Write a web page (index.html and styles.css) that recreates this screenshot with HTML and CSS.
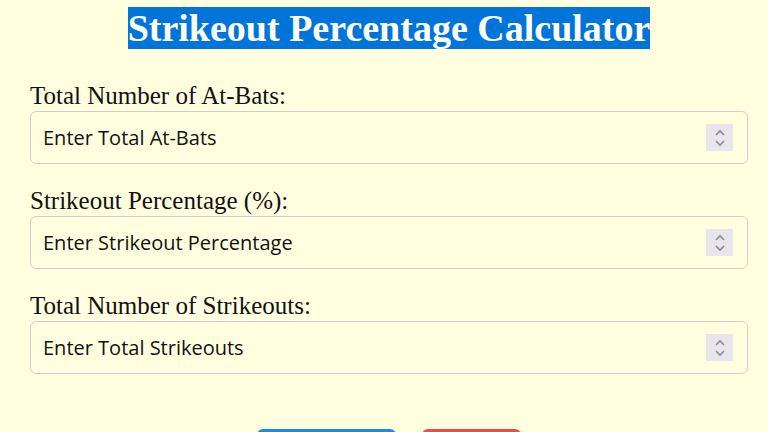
FILE: index.html
```html
<!DOCTYPE html>
<html lang="en">
<head>
<meta charset="utf-8">
<title>Strikeout Percentage Calculator</title>
<link rel="stylesheet" href="styles.css">
</head>
<body>
<div class="page">
  <h1 class="title"><span class="title-text">Strikeout Percentage Calculator</span></h1>
  <form class="calc">
    <div class="field">
      <label class="label" for="atbats">Total Number of At-Bats:</label>
      <div class="box">
        <input class="inp" id="atbats" type="text" placeholder="Enter Total At-Bats">
        <span class="spin"><svg width="14" height="22" viewBox="0 0 14 22"><path d="M3 8 L7 4 L11 8" fill="none" stroke="#8a8a94" stroke-width="1.6"/><path d="M3 14 L7 18 L11 14" fill="none" stroke="#8a8a94" stroke-width="1.6"/></svg></span>
      </div>
    </div>
    <div class="field">
      <label class="label" for="pct">Strikeout Percentage (%):</label>
      <div class="box">
        <input class="inp" id="pct" type="text" placeholder="Enter Strikeout Percentage">
        <span class="spin"><svg width="14" height="22" viewBox="0 0 14 22"><path d="M3 8 L7 4 L11 8" fill="none" stroke="#8a8a94" stroke-width="1.6"/><path d="M3 14 L7 18 L11 14" fill="none" stroke="#8a8a94" stroke-width="1.6"/></svg></span>
      </div>
    </div>
    <div class="field">
      <label class="label" for="so">Total Number of Strikeouts:</label>
      <div class="box">
        <input class="inp" id="so" type="text" placeholder="Enter Total Strikeouts">
        <span class="spin"><svg width="14" height="22" viewBox="0 0 14 22"><path d="M3 8 L7 4 L11 8" fill="none" stroke="#8a8a94" stroke-width="1.6"/><path d="M3 14 L7 18 L11 14" fill="none" stroke="#8a8a94" stroke-width="1.6"/></svg></span>
      </div>
    </div>
    <div class="actions">
      <button type="button" class="btn btn-calc">Calculate</button>
      <button type="button" class="btn btn-reset">Reset</button>
    </div>
  </form>
</div>
</body>
</html>
```

FILE: styles.css
```css
html, body {
  margin: 0;
  padding: 0;
  background: #ffffe0;
}
body {
  font-family: "Liberation Serif", "Times New Roman", serif;
  color: #111;
}
.page {
  padding: 8px 20px 0 30px;
}
.title {
  margin: 0;
  text-align: center;
  font-size: 38px;
  font-weight: bold;
  line-height: 41px;
}
.title-text {
  background: #0074d9;
  color: #ffffff;
}
.calc {
  margin-top: 31px;
}
.field {
  margin-bottom: 21px;
}
.label {
  display: block;
  font-size: 25px;
  line-height: 31px;
  height: 31px;
}
.box {
  display: flex;
  align-items: center;
  height: 53px;
  box-sizing: border-box;
  border: 1px solid #cfcfcf;
  border-radius: 6px;
  padding: 0 14px 0 12px;
}
.inp {
  flex: 1;
  border: none;
  background: transparent;
  outline: none;
  font-family: "Open Sans", "Noto Sans", sans-serif;
  font-size: 20px;
  color: #111;
  padding: 0;
  margin: 0;
}
.inp::placeholder {
  color: #111;
  opacity: 1;
}
.spin {
  display: flex;
  align-items: center;
  justify-content: center;
  width: 27px;
  height: 27px;
  background: #e8e6ec;
}
.actions {
  display: flex;
  justify-content: center;
  gap: 26px;
  margin-top: 55px;
}
.btn {
  border: none;
  border-radius: 6px;
  color: #fff;
  font-family: "Liberation Serif", serif;
  font-size: 20px;
  height: 44px;
  padding: 0;
}
.btn-calc {
  width: 139px;
  background: #1a8fdc;
}
.btn-reset {
  width: 99px;
  background: #ea4c4c;
}
```
